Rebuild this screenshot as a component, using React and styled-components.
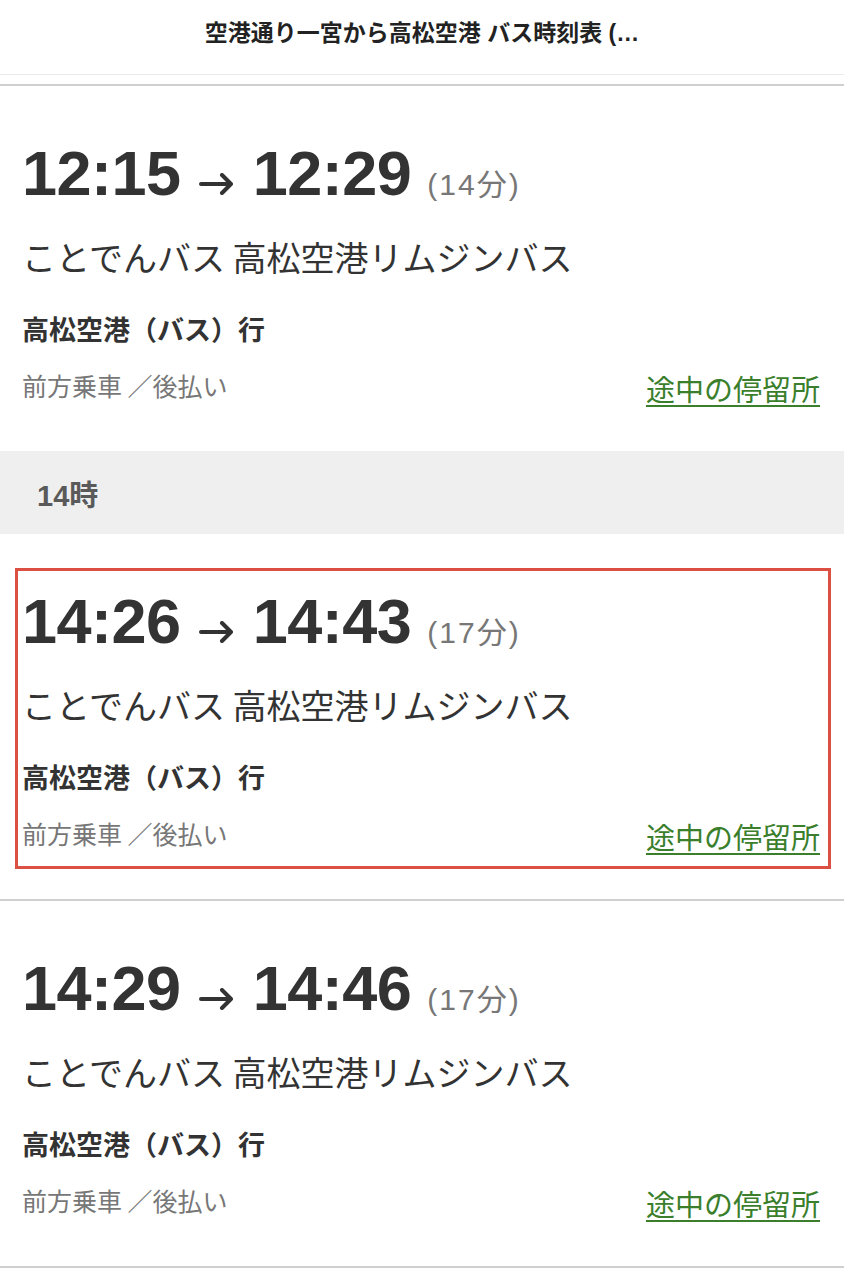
import React from 'react';
import styled, { createGlobalStyle } from 'styled-components';

const GlobalStyle = createGlobalStyle`
  html, body {
    margin: 0;
    padding: 0;
    background: #fff;
  }
  body {
    font-family: "Liberation Sans", "Noto Sans CJK JP", sans-serif;
    color: #333;
  }
`;

const Page = styled.div`
  width: 844px;
  background: #fff;
`;

const Header = styled.header`
  height: 75px;
  border-bottom: 1px solid #ebebeb;
  display: flex;
  justify-content: center;
  padding-top: 17px;
  box-sizing: border-box;
  margin-bottom: 9px;
`;

const Title = styled.h1`
  margin: 0;
  font-family: "Liberation Sans", "Noto Sans CJK JP", sans-serif;
  font-size: 23px;
  line-height: 32px;
  font-weight: 700;
  color: #222;
`;

const List = styled.div`
  border-top: 2px solid #cfcfcf;
`;

const Row = styled.div`
  padding: 34px 13px 30px 15px;
  border-bottom: ${({ $last }) => ($last ? '2px solid #cfcfcf' : 'none')};
  & + & {
    border-top: 2px solid #cfcfcf;
  }
`;

const Box = styled.div`
  border: 3px solid ${({ $active }) => ($active ? '#dc4f43' : 'transparent')};
  padding: 18px 8px 10px 4px;
`;

const TimeLine = styled.div`
  display: flex;
  align-items: baseline;
  font-family: "Liberation Sans", Arial, sans-serif;
  line-height: 64px;
  height: 64px;
`;

const Time = styled.span`
  font-size: 63px;
  font-weight: 700;
  color: #333;
  letter-spacing: -0.5px;
`;

const ArrowIcon = styled.svg`
  width: 35px;
  height: 22px;
  margin: 0 19px 2px 18px;
  align-self: baseline;
  flex: none;
`;

const Duration = styled.span`
  margin-left: 16px;
  font-family: "Liberation Sans", "Noto Sans CJK JP", sans-serif;
  font-size: 30px;
  letter-spacing: 2px;
  color: #777;
`;

const BusName = styled.div`
  margin-top: 29px;
  font-family: "Noto Sans CJK JP", sans-serif;
  font-size: 34px;
  line-height: 46px;
  color: #333;
`;

const Dest = styled.div`
  margin-top: 30px;
  font-family: "Noto Sans CJK JP", sans-serif;
  font-size: 27px;
  font-weight: 700;
  line-height: 38px;
  color: #333;
`;

const Bottom = styled.div`
  margin-top: 19px;
  display: flex;
  justify-content: space-between;
  align-items: flex-end;
`;

const Note = styled.span`
  font-family: "Noto Sans CJK JP", sans-serif;
  font-size: 25px;
  line-height: 36px;
  color: #777;
  margin-bottom: 5px;
`;

const StopsLink = styled.a`
  font-family: "Noto Sans CJK JP", sans-serif;
  font-size: 29px;
  line-height: 40px;
  color: #3b7f2d;
  text-decoration: underline;
  text-underline-offset: 4px;
  text-decoration-thickness: 2px;
`;

const HourBand = styled.div`
  height: 83px;
  background: #efefef;
  display: flex;
  align-items: center;
  padding-left: 37px;
  font-family: "Liberation Sans", "Noto Sans CJK JP", sans-serif;
  font-size: 29px;
  font-weight: 700;
  color: #5a5a5a;
`;

const Arrow = () => (
  <ArrowIcon viewBox="0 0 35 22" fill="none">
    <path
      d="M2 11H32M23 2L32 11L23 20"
      stroke="#333"
      strokeWidth="4"
      strokeLinecap="round"
      strokeLinejoin="round"
    />
  </ArrowIcon>
);

function Trip({ dep, arr, mins, active, last }) {
  return (
    <Row $last={last}>
      <Box $active={active}>
        <TimeLine>
          <Time>{dep}</Time>
          <Arrow />
          <Time>{arr}</Time>
          <Duration>({mins}分)</Duration>
        </TimeLine>
        <BusName>ことでんバス 高松空港リムジンバス</BusName>
        <Dest>高松空港（バス）行</Dest>
        <Bottom>
          <Note>前方乗車 ／後払い</Note>
          <StopsLink href="#">途中の停留所</StopsLink>
        </Bottom>
      </Box>
    </Row>
  );
}

export default function App() {
  return (
    <Page>
      <GlobalStyle />
      <Header>
        <Title>空港通り一宮から高松空港 バス時刻表 (…</Title>
      </Header>
      <List>
        <Trip dep="12:15" arr="12:29" mins={14} />
        <HourBand>14時</HourBand>
        <Trip dep="14:26" arr="14:43" mins={17} active />
        <Trip dep="14:29" arr="14:46" mins={17} last />
      </List>
    </Page>
  );
}
